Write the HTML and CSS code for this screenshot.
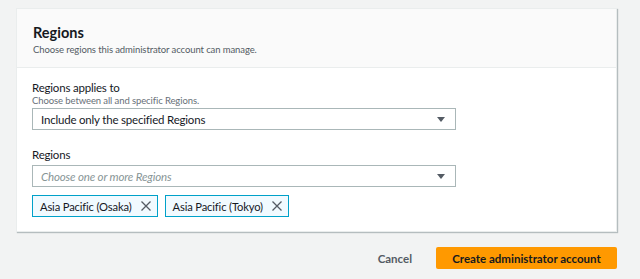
FILE: index.html
```html
<!DOCTYPE html>
<html lang="en">
<head>
    <meta charset="UTF-8">
    <title>Regions</title>
    <link rel="stylesheet" href="styles.css">
</head>
<body>
    <div class="page">
        <div class="card">
            <div class="card-head">
                <h2 class="title">Regions</h2>
                <p class="desc">Choose regions this administrator account can manage.</p>
            </div>
            <div class="card-body">
                <div class="field">
                    <div class="label">Regions applies to</div>
                    <div class="hint">Choose between all and specific Regions.</div>
                    <div class="select">
                        <span>Include only the specified Regions</span>
                        <span class="caret"></span>
                    </div>
                </div>
                <div class="field">
                    <div class="label">Regions</div>
                    <div class="select">
                        <span class="placeholder">Choose one or more Regions</span>
                        <span class="caret"></span>
                    </div>
                    <div class="tokens">
                        <div class="token">Asia Pacific (Osaka)
                            <svg class="x" width="10" height="10" viewBox="0 0 10 10"><path d="M0.5 0.5L9.5 9.5M9.5 0.5L0.5 9.5" stroke="#545b64" stroke-width="1.3" fill="none"/></svg>
                        </div>
                        <div class="token">Asia Pacific (Tokyo)
                            <svg class="x" width="10" height="10" viewBox="0 0 10 10"><path d="M0.5 0.5L9.5 9.5M9.5 0.5L0.5 9.5" stroke="#545b64" stroke-width="1.3" fill="none"/></svg>
                        </div>
                    </div>
                </div>
            </div>
        </div>
        <div class="actions">
            <button class="btn-link">Cancel</button>
            <button class="btn-primary">Create administrator account</button>
        </div>
    </div>
</body>
</html>
```

FILE: styles.css
```css
body{
    margin: 0;
    background: #f2f3f3;
    font-family: Lato, "Open Sans", sans-serif;
    color: #16191f;
}
.page{
    padding: 8px 23px 0 16px;
}
.card{
    background: #fff;
    border: 1px solid #eaeded;
    box-shadow: 1px 1px 1px rgba(0,28,36,0.25);
}
.card-head{
    background: #fafafa;
    border-bottom: 1px solid #eaeded;
    padding: 15px 16px 0;
    height: 43px;
}
.title{
    margin: 0;
    font-size: 14.5px;
    font-weight: 700;
    line-height: 18px;
}
.desc{
    margin: 2px 0 0;
    font-size: 9.5px;
    letter-spacing: -0.1px;
    color: #545b64;
    line-height: 12px;
}
.card-body{
    padding: 12px 160px 14px 15px;
}
.field{
    margin-bottom: 17px;
}
.field:last-child{
    margin-bottom: 0;
}
.label{
    font-size: 11.5px;
    letter-spacing: -0.2px;
    line-height: 15px;
}
.hint{
    font-size: 9.5px;
    letter-spacing: -0.1px;
    color: #687078;
    line-height: 12px;
    margin-bottom: 1px;
}
.field .label + .select{
    margin-top: 3px;
}
.select{
    display: flex;
    align-items: center;
    justify-content: space-between;
    height: 20px;
    border: 1px solid #aab7b8;
    padding: 0 10px 0 8px;
    font-size: 11.5px;
    letter-spacing: -0.2px;
}
.placeholder{
    color: #879596;
    font-style: italic;
    letter-spacing: -0.15px;
}
.caret{
    width: 0;
    height: 0;
    border-top: 5px solid #545b64;
    border-left: 4px solid transparent;
    border-right: 4px solid transparent;
}
.tokens{
    display: flex;
    gap: 7px;
    margin-top: 8px;
}
.token{
    display: flex;
    align-items: center;
    gap: 9px;
    height: 20px;
    padding: 0 6px 0 7px;
    background: #f1faff;
    border: 1px solid #00a1c9;
    font-size: 11.2px;
    letter-spacing: -0.15px;
}
.actions{
    display: flex;
    justify-content: flex-end;
    align-items: center;
    gap: 24px;
    margin-top: 15px;
}
button{
    font-family: inherit;
    font-weight: 700;
    font-size: 11.5px;
    border: none;
    cursor: pointer;
}
.btn-link{
    background: none;
    color: #545b64;
    padding: 0;
}
.btn-primary{
    background: #ff9900;
    color: #16191f;
    height: 22px;
    width: 181px;
    white-space: nowrap;
    border-radius: 2px;
}
```
